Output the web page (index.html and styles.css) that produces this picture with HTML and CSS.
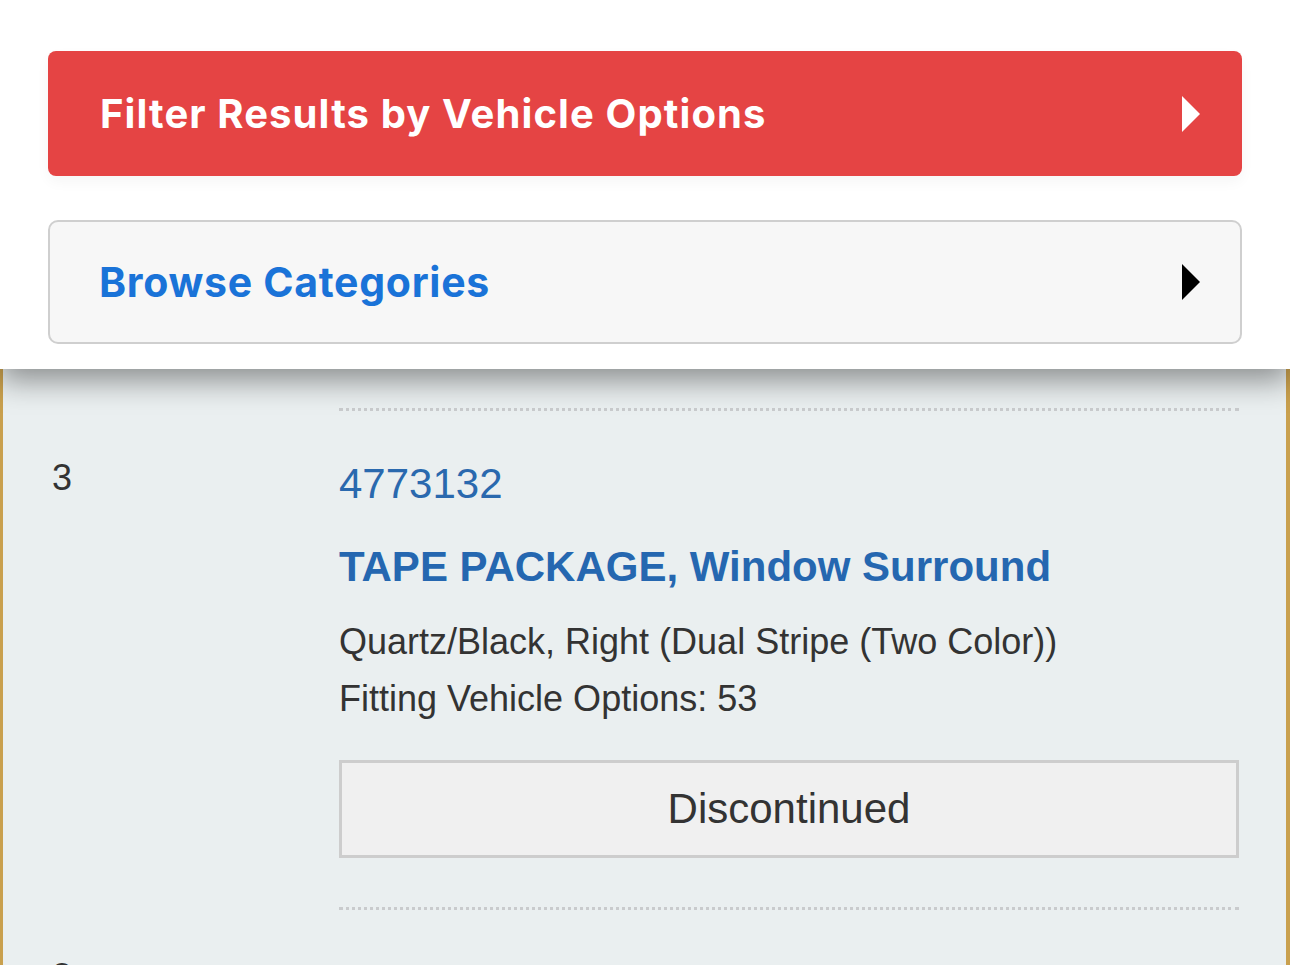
FILE: index.html
```html
<!DOCTYPE html>
<html lang="en">

<head>
    <meta charset="UTF-8">
    <meta name="viewport" content="width=device-width, initial-scale=1.0">
    <title>Parts Results</title>
    <link rel="stylesheet" href="styles.css">
</head>

<body>
    <div class="filter-panel">
        <button class="filter-btn">
            <span>Filter Results by Vehicle Options</span>
            <svg class="caret" width="18" height="36" viewBox="0 0 18 36"><polygon points="0,0 18,18 0,36" fill="#fff"/></svg>
        </button>
        <button class="browse-btn">
            <span>Browse Categories</span>
            <svg class="caret" width="18" height="36" viewBox="0 0 18 36"><polygon points="0,0 18,18 0,36" fill="#000"/></svg>
        </button>
    </div>

    <div class="results">
        <div class="result-row">
            <div class="result-qty">3</div>
            <div class="result-main">
                <a class="part-number" href="#">4773132</a>
                <h2 class="part-name">TAPE PACKAGE, Window Surround</h2>
                <p class="part-desc">Quartz/Black, Right (Dual Stripe (Two Color))</p>
                <p class="part-desc">Fitting Vehicle Options: 53</p>
                <div class="status-box">Discontinued</div>
            </div>
        </div>

        <div class="result-row">
            <div class="result-qty">3</div>
            <div class="result-main">
                <a class="part-number" href="#">4773133</a>
            </div>
        </div>
    </div>
</body>

</html>
```

FILE: styles.css
```css
body {
    margin: 0;
    padding: 0;
    background-color: #fff;
    font-family: 'Liberation Sans', Arial, sans-serif;
    color: #333;
    height: 965px;
    overflow: hidden;
}

/* Panel de filtros arriba */
.filter-panel {
    position: relative;
    z-index: 2;
    background-color: #fff;
    padding: 51px 48px 25px 48px;
    box-shadow: 0 12px 28px rgba(0, 0, 0, 0.4);
}

.filter-btn,
.browse-btn {
    display: flex;
    justify-content: space-between;
    align-items: center;
    width: 100%;
    font-family: 'Inter', 'Noto Sans', sans-serif;
    font-weight: 700;
    text-align: left;
    cursor: pointer;
}

.filter-btn {
    height: 125px;
    padding: 0 42px 0 52px;
    background-color: #e54444;
    color: #fff;
    font-size: 40px;
    letter-spacing: 1.1px;
    border: none;
    border-radius: 8px;
    box-shadow: 0 6px 14px rgba(0, 0, 0, 0.04);
}

.browse-btn {
    height: 124px;
    margin-top: 44px;
    padding: 0 40px 0 49px;
    background-color: #f7f7f7;
    color: #1a73d8;
    font-size: 41px;
    letter-spacing: 0.7px;
    border: 2px solid #cfcfcf;
    border-radius: 10px;
}

.caret {
    display: block;
    flex-shrink: 0;
}

/* Lista de resultados */
.results {
    position: relative;
    z-index: 1;
    background-color: #eaeff0;
    border-left: 3px solid #c9a04e;
    border-right: 4px solid #c9a04e;
    padding-top: 39px;
    min-height: 700px;
}

.result-row {
    display: grid;
    grid-template-columns: 336px 900px;
}

.result-qty {
    padding: 52px 0 0 49px;
    font-size: 36px;
    line-height: 1;
    color: #333;
}

.result-main {
    border-top: 3px dotted #c9cbcd;
    padding: 52px 0 49px 0;
}

.part-number {
    display: block;
    font-size: 42px;
    line-height: 1;
    color: #2a69ae;
    text-decoration: none;
}

.part-name {
    margin: 41px 0 0 0;
    font-size: 42px;
    line-height: 1;
    font-weight: 700;
    color: #2567b0;
}

.part-desc {
    margin: 0;
    font-size: 36px;
    line-height: 57px;
    color: #333;
}

.part-name + .part-desc {
    margin-top: 25px;
}

.status-box {
    margin-top: 33px;
    height: 92px;
    display: flex;
    align-items: center;
    justify-content: center;
    background-color: #f0f0f0;
    border: 3px solid #cdcdcd;
    font-size: 42px;
    color: #333;
}
```
